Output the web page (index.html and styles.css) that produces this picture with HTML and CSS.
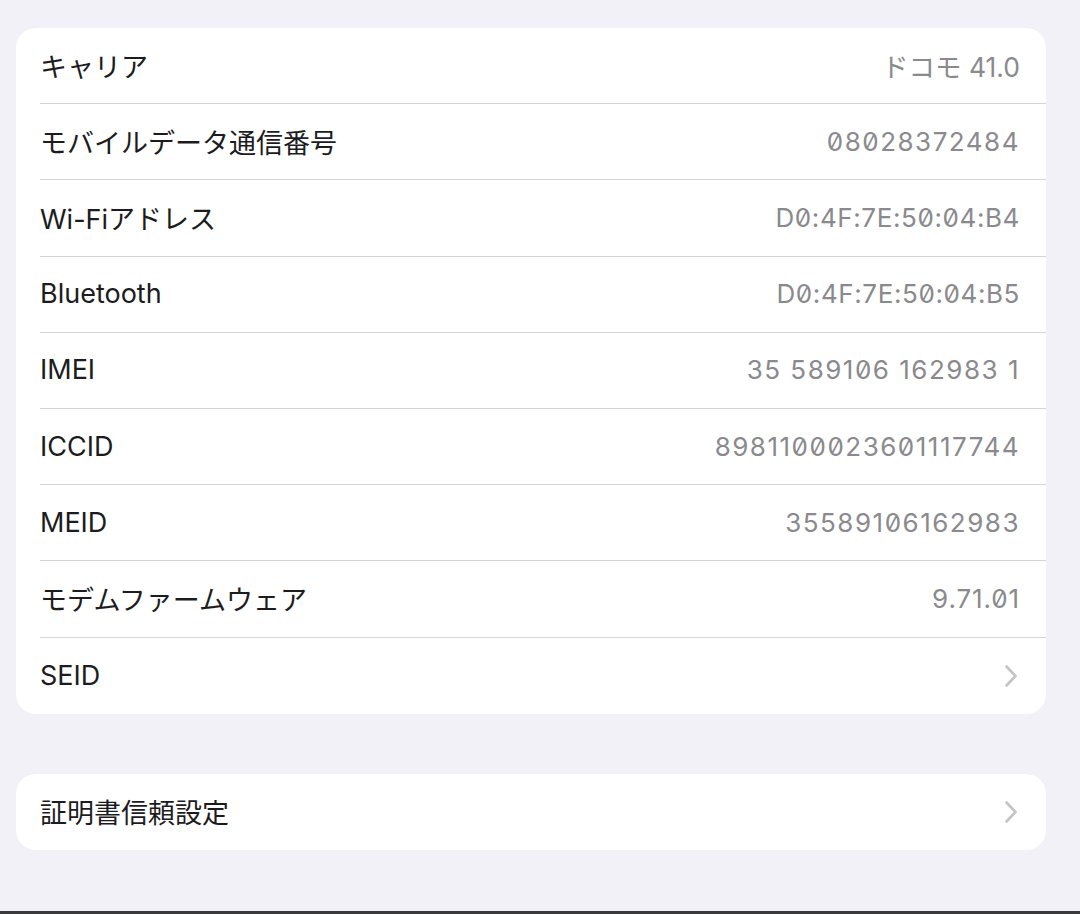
FILE: index.html
```html
<!DOCTYPE html>
<html lang="ja">
<head>
  <meta charset="UTF-8" />
  <title>情報</title>
  <meta name="viewport" content="width=device-width, initial-scale=1.0" />
  <link rel="stylesheet" href="styles.css">
</head>
<body>
  <div class="screen">

    <!-- Device info -->
    <div class="group">
      <div class="row">
        <span class="label">キャリア</span>
        <span class="value prop">ドコモ 41.0</span>
      </div>
      <div class="row">
        <span class="label">モバイルデータ通信番号</span>
        <span class="value">08028372484</span>
      </div>
      <div class="row">
        <span class="label">Wi-Fiアドレス</span>
        <span class="value mac">D0:4F:7E:50:04:B4</span>
      </div>
      <div class="row">
        <span class="label">Bluetooth</span>
        <span class="value mac">D0:4F:7E:50:04:B5</span>
      </div>
      <div class="row">
        <span class="label">IMEI</span>
        <span class="value">35 589106 162983 1</span>
      </div>
      <div class="row">
        <span class="label">ICCID</span>
        <span class="value">8981100023601117744</span>
      </div>
      <div class="row">
        <span class="label">MEID</span>
        <span class="value">35589106162983</span>
      </div>
      <div class="row">
        <span class="label">モデムファームウェア</span>
        <span class="value short">9.71.01</span>
      </div>
      <div class="row">
        <span class="label">SEID</span>
        <svg class="chevron" viewBox="0 0 14 24" width="14" height="24">
          <path d="M2.5 2.5 L11.5 12 L2.5 21.5" fill="none" stroke="#c4c4c7" stroke-width="2.6" stroke-linecap="round" stroke-linejoin="round"/>
        </svg>
      </div>
    </div>

    <!-- Certificates -->
    <div class="group">
      <div class="row">
        <span class="label">証明書信頼設定</span>
        <svg class="chevron" viewBox="0 0 14 24" width="14" height="24">
          <path d="M2.5 2.5 L11.5 12 L2.5 21.5" fill="none" stroke="#c4c4c7" stroke-width="2.6" stroke-linecap="round" stroke-linejoin="round"/>
        </svg>
      </div>
    </div>

    <div class="home-bar"></div>
  </div>
</body>
</html>
```

FILE: styles.css
```css
* {
  box-sizing: border-box;
}

html, body {
  margin: 0;
  padding: 0;
  background: #f2f1f8;
}

body {
  font-family: Inter, "Noto Sans CJK JP", sans-serif;
  color: #1c1c1e;
}

.screen {
  height: 914px;
  display: flex;
  flex-direction: column;
  padding: 28px 34px 0 16px;
}

.group {
  background: #fff;
  border-radius: 20px;
  padding-left: 24px;
  margin-bottom: 60px;
}

.row {
  height: 76.2px;
  display: flex;
  align-items: center;
  justify-content: space-between;
  padding-right: 26px;
  border-bottom: 1px solid #d4d4d8;
}

.row:last-child {
  border-bottom: none;
}

.label {
  font-size: 27px;
  margin-top: -1px;
}

.value {
  font-size: 26px;
  color: #8a8a8e;
  margin-top: -1px;
  letter-spacing: 1.5px;
  font-feature-settings: "zero";
}

.value.prop {
  font-size: 26.5px;
  letter-spacing: 0;
  font-feature-settings: normal;
}

.value.mac {
  letter-spacing: 0.6px;
}

.value.short {
  letter-spacing: 0.9px;
}

.chevron {
  display: block;
  margin-right: 2px;
}

.home-bar {
  margin-top: auto;
  margin-left: -16px;
  margin-right: -34px;
  height: 3px;
  background: #3a3a3c;
}
```
